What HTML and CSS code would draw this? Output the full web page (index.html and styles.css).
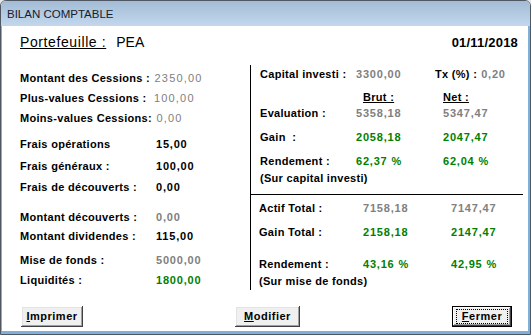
FILE: index.html
```html
<!DOCTYPE html>
<html lang="fr">
<head>
<meta charset="utf-8">
<title>Bilan comptable</title>
<link rel="stylesheet" href="styles.css">
</head>
<body>
<div class="window">
  <div class="titlebar">BILAN COMPTABLE</div>
  <div class="client">
    <div class="header">
      <div class="folio"><span class="folio-label">Portefeuille :</span><span class="folio-name">PEA</span></div>
      <div class="date">01/11/2018</div>
    </div>
    <div class="main">
      <div class="left">
        <div class="span"><span class="lbl">Montant des Cessions :</span> <span class="val thin grey">2350,00</span></div>
        <div class="span"><span class="lbl">Plus-values Cessions :</span> <span class="val thin grey gap">100,00</span></div>
        <div class="span"><span class="lbl">Moins-values Cessions:</span> <span class="val thin grey">0,00</span></div>
        <div class="lbl">Frais opérations</div><div class="val">15,00</div>
        <div class="lbl">Frais généraux :</div><div class="val">100,00</div>
        <div class="lbl">Frais de découverts :</div><div class="val">0,00</div>
        <div class="lbl">Montant découverts :</div><div class="val grey">0,00</div>
        <div class="lbl">Montant dividendes :</div><div class="val">115,00</div>
        <div class="lbl">Mise de fonds :</div><div class="val grey">5000,00</div>
        <div class="lbl">Liquidités :</div><div class="val green">1800,00</div>
      </div>
      <div class="right">
        <div class="top">
          <div class="capital">
            <span class="lbl cap-lbl">Capital investi :</span>
            <span class="val grey cap-val">3300,00</span>
            <span class="lbl">Tx (%) :</span>
            <span class="val grey tx-val">0,20</span>
          </div>
          <div></div><div class="lbl head brut">Brut :</div><div class="lbl head">Net :</div>
          <div class="lbl">Evaluation :</div><div class="val grey">5358,18</div><div class="val grey">5347,47</div>
          <div class="lbl">Gain&nbsp; :</div><div class="val green">2058,18</div><div class="val green">2047,47</div>
          <div class="lbl">Rendement :</div><div class="val green">62,37 %</div><div class="val green">62,04 %</div>
          <div class="lbl full">(Sur capital investi)</div>
        </div>
        <div class="bottom">
          <div class="lbl">Actif Total :</div><div class="val grey">7158,18</div><div class="val grey">7147,47</div>
          <div class="lbl">Gain Total :</div><div class="val green">2158,18</div><div class="val green">2147,47</div>
          <div class="lbl">Rendement :</div><div class="val green">43,16 %</div><div class="val green">42,95 %</div>
          <div class="lbl full">(Sur mise de fonds)</div>
        </div>
      </div>
    </div>
    <div class="buttons">
      <button class="btn btn-print" type="button"><u>I</u>mprimer</button>
      <button class="btn btn-edit" type="button"><u>M</u>odifier</button>
      <button class="btn btn-close" type="button"><span class="focus"><u>F</u>ermer</span></button>
    </div>
  </div>
</div>
</body>
</html>
```

FILE: styles.css
```css
* { box-sizing: border-box; }

html, body {
  margin: 0;
  padding: 0;
}

body {
  width: 531px;
  height: 335px;
  background: #e6e6e6;
  font-family: "Liberation Sans", Arial, sans-serif;
  color: #000;
  overflow: hidden;
}

.window {
  width: 531px;
  height: 335px;
  border: 1px solid #4f5862;
  border-radius: 6px 6px 0 0;
  display: flex;
  flex-direction: column;
  overflow: hidden;
  background: #fff;
}

.titlebar {
  height: 25px;
  flex: none;
  padding: 1px 0 0 6px;
  line-height: 24px;
  font-size: 11.5px;
  color: #15202c;
  background: linear-gradient(to bottom, #a3bbd5 0%, #b3cae2 50%, #c3d7ec 100%);
}

.client {
  flex: 1;
  border-style: solid;
  border-color: #7fb0dc;
  border-width: 0 2px 3px 1px;
  padding: 8px 5px 0 18px;
  display: flex;
  flex-direction: column;
  background: #fff;
}

.header {
  display: flex;
  justify-content: space-between;
  align-items: baseline;
  height: 16px;
  line-height: 16px;
  padding-right: 0;
}

.folio {
  font-size: 14px;
  letter-spacing: 0.6px;
}

.folio-label {
  text-decoration: underline;
}

.folio-name {
  margin-left: 10px;
  letter-spacing: 0;
}

.date {
  font-size: 13px;
  font-weight: bold;
  letter-spacing: 0.2px;
  margin-right: 5px;
}

.main {
  margin-top: 15px;
  height: 225px;
  display: flex;
  flex: none;
}

.lbl {
  font-size: 11px;
  font-weight: bold;
  letter-spacing: 0.3px;
  white-space: nowrap;
}

.val {
  font-size: 11px;
  font-weight: bold;
  letter-spacing: 0.8px;
  white-space: nowrap;
}

.thin {
  font-weight: normal;
  letter-spacing: 1.2px;
}

.gap {
  margin-left: 3px;
}

.grey { color: #808080; }
.green { color: #008000; }

.left {
  width: 230px;
  padding-top: 5px;
  display: grid;
  grid-template-columns: 136px auto;
  grid-template-rows: 20px 20px 28px 22px 21px 30px 19px 24px 20px 13px;
  line-height: 13px;
  align-content: start;
}

.span {
  grid-column: 1 / -1;
  white-space: nowrap;
}

.right {
  width: 273px;
  border-left: 1px solid #000;
  display: flex;
  flex-direction: column;
  line-height: 13px;
}

.top {
  padding: 3px 0 9px 9px;
  display: grid;
  grid-template-columns: 96px 87px auto;
  grid-template-rows: 23px 16px 24px 24px 17px 13px;
}

.capital {
  grid-column: 1 / -1;
  display: flex;
}

.cap-lbl { width: 96px; }
.cap-val { width: 79px; }
.tx-val { margin-left: 4px; }

.head {
  text-decoration: underline;
}

.brut {
  margin-left: 7px;
}

.full {
  grid-column: 1 / -1;
}

.bottom {
  border-top: 1px solid #000;
  padding: 7px 0 0 8px;
  display: grid;
  grid-template-columns: 104px 88px auto;
  grid-template-rows: 24px 32px 17px 13px;
}

.buttons {
  margin: 16px 11px 0 1px;
  display: flex;
  justify-content: space-between;
}

.btn {
  height: 21px;
  padding: 0 0 2px 0;
  margin: 0;
  font-family: "Liberation Sans", Arial, sans-serif;
  font-size: 11px;
  font-weight: bold;
  letter-spacing: 0.5px;
  color: #000;
  background: #f0f0f0;
  border: none;
  border-radius: 0;
  box-shadow: inset -1px -1px 0 #404040, inset 1px 1px 0 #ffffff, inset -2px -2px 0 #a0a0a0, inset 2px 2px 0 #e3e3e3;
  display: flex;
  align-items: center;
  justify-content: center;
}

.btn-print { width: 62px; }
.btn-edit { width: 65px; }

.btn-close {
  width: 60px;
  box-shadow: inset 0 0 0 1px #000, inset -2px -2px 0 #404040, inset 2px 2px 0 #ffffff, inset -3px -3px 0 #a0a0a0;
  padding: 0;
}

.focus {
  display: block;
  width: 52px;
  height: 15px;
  line-height: 13px;
  border: 1px dotted #000;
  text-align: center;
}
```
